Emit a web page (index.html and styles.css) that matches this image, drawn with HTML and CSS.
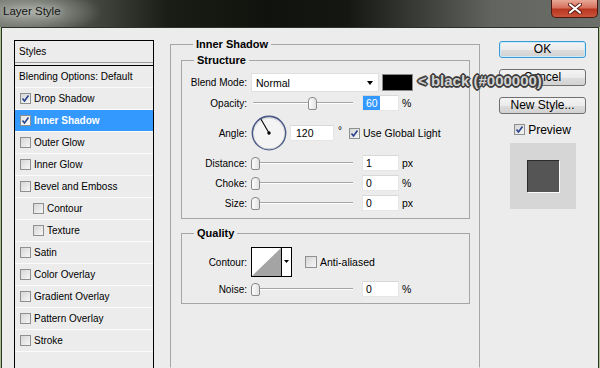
FILE: index.html
```html
<!DOCTYPE html>
<html lang="en">
<head>
  <meta charset="UTF-8">
  <title>Layer Style</title>
  <link rel="stylesheet" href="styles.css">
</head>
<body>
  <div class="titlebar">
    <span class="title">Layer Style</span>
    <div class="close">
      <svg width="14" height="11" viewBox="0 0 14 11">
        <path d="M2 1.5 L12 9.5 M12 1.5 L2 9.5" stroke="#5a1b10" stroke-width="4" stroke-linecap="round"/>
        <path d="M2 1.5 L12 9.5 M12 1.5 L2 9.5" stroke="#fff" stroke-width="2.2" stroke-linecap="round"/>
      </svg>
    </div>
  </div>

  <div class="window">
    <ul class="styles-list">
      <li class="head">Styles</li>
      <li class="blend">Blending Options: Default</li>
      <li><span class="cb"><svg width="9" height="9" viewBox="0 0 9 9"><path d="M1.5 4.5 L3.5 7 L7.5 1.5" stroke="#27418c" stroke-width="1.6" fill="none"/></svg></span>Drop Shadow</li>
      <li class="selected"><span class="cb"><svg width="9" height="9" viewBox="0 0 9 9"><path d="M1.5 4.5 L3.5 7 L7.5 1.5" stroke="#27418c" stroke-width="1.6" fill="none"/></svg></span>Inner Shadow</li>
      <li><span class="cb"></span>Outer Glow</li>
      <li><span class="cb"></span>Inner Glow</li>
      <li><span class="cb"></span>Bevel and Emboss</li>
      <li class="sub"><span class="cb"></span>Contour</li>
      <li class="sub"><span class="cb"></span>Texture</li>
      <li><span class="cb"></span>Satin</li>
      <li><span class="cb"></span>Color Overlay</li>
      <li><span class="cb"></span>Gradient Overlay</li>
      <li><span class="cb"></span>Pattern Overlay</li>
      <li><span class="cb"></span>Stroke</li>
    </ul>

    <div class="settings">
      <fieldset class="group outer">
        <legend>Inner Shadow</legend>

        <fieldset class="group structure">
          <legend>Structure</legend>
          <div class="row blend-row">
            <span class="lbl">Blend Mode:</span>
            <div class="select">Normal<span class="arrow"></span></div>
            <span class="swatch"></span>
            <span class="note">&lt; black (#000000)</span>
          </div>
          <div class="row opacity-row">
            <span class="lbl">Opacity:</span>
            <div class="slider"><span class="thumb" style="margin-left:57px"></span></div>
            <div class="num"><span class="hl">60</span></div>
            <span class="unit">%</span>
          </div>
          <div class="row angle-row">
            <span class="lbl">Angle:</span>
            <svg class="dial" width="36" height="36" viewBox="0 0 36 36">
              <circle cx="18" cy="18" r="16.6" fill="#f4f4f4" stroke="#4a5a86" stroke-width="1.6"/>
              <circle cx="18" cy="18.6" r="15.5" fill="none" stroke="#d8d8d8" stroke-width="0.8"/>
              <line x1="18" y1="18" x2="10" y2="4.3" stroke="#000" stroke-width="1.1"/>
              <circle cx="18" cy="18" r="1.7" fill="#000"/>
            </svg>
            <div class="num wide">120</div>
            <span class="deg">°</span>
            <span class="cb"><svg width="9" height="9" viewBox="0 0 9 9"><path d="M1.5 4.5 L3.5 7 L7.5 1.5" stroke="#27418c" stroke-width="1.6" fill="none"/></svg></span>
            <span class="cb-label">Use Global Light</span>
          </div>
          <div class="row">
            <span class="lbl">Distance:</span>
            <div class="slider"><span class="thumb"></span></div>
            <div class="num">1</div>
            <span class="unit">px</span>
          </div>
          <div class="row">
            <span class="lbl">Choke:</span>
            <div class="slider"><span class="thumb"></span></div>
            <div class="num">0</div>
            <span class="unit">%</span>
          </div>
          <div class="row">
            <span class="lbl">Size:</span>
            <div class="slider"><span class="thumb"></span></div>
            <div class="num">0</div>
            <span class="unit">px</span>
          </div>
        </fieldset>

        <fieldset class="group quality">
          <legend>Quality</legend>
          <div class="row contour-row">
            <span class="lbl">Contour:</span>
            <svg class="contour" width="41" height="30" viewBox="0 0 41 30">
              <rect x="0.5" y="0.5" width="40" height="29" fill="#fff" stroke="#000"/>
              <polygon points="1,29 30,1 30,29" fill="#a4a4a4"/>
              <line x1="30.5" y1="0" x2="30.5" y2="30" stroke="#000"/>
              <polygon points="33,13 38,13 35.5,16" fill="#000"/>
            </svg>
            <span class="cb anti"></span>
            <span class="cb-label">Anti-aliased</span>
          </div>
          <div class="row">
            <span class="lbl">Noise:</span>
            <div class="slider"><span class="thumb"></span></div>
            <div class="num">0</div>
            <span class="unit">%</span>
          </div>
        </fieldset>
      </fieldset>
    </div>

    <div class="actions">
      <button class="btn default">OK</button>
      <button class="btn">Cancel</button>
      <button class="btn">New Style...</button>
      <label class="preview-check">
        <span class="cb"><svg width="9" height="9" viewBox="0 0 9 9"><path d="M1.5 4.5 L3.5 7 L7.5 1.5" stroke="#27418c" stroke-width="1.6" fill="none"/></svg></span>
        Preview
      </label>
      <div class="preview"><div class="preview-square"></div></div>
    </div>
  </div>
</body>
</html>
```

FILE: styles.css
```css
* {
  box-sizing: border-box;
}

body {
  margin: 0;
  width: 600px;
  height: 368px;
  overflow: hidden;
  display: flex;
  flex-direction: column;
  font-family: 'Liberation Sans', Arial, sans-serif;
  font-size: 10px;
  color: #000;
  background: #a9c28f;
}

/* title bar */

.titlebar {
  height: 27px;
  flex: none;
  display: flex;
  justify-content: space-between;
  align-items: flex-start;
  background:
    radial-gradient(ellipse 70px 22px at 32px 12px, rgba(190, 194, 186, 0.75), rgba(190, 194, 186, 0) 100%),
    linear-gradient(90deg, #6a6d66 0, #4a4d46 14%, #1a1d16 28%, #10130d 45%, #141712 58%, #3b3d38 70%, #62645f 82%, #6c6e69 100%);
}

.title {
  padding: 5px 0 0 3px;
  font-size: 11.5px;
  color: #141414;
  text-shadow: 0 0 6px #d4d6d2;
}

.close {
  width: 47px;
  height: 18px;
  margin-right: 2px;
  display: flex;
  align-items: center;
  justify-content: center;
  border: 1px solid #4a1a12;
  border-top: none;
  border-radius: 0 0 5px 5px;
  background: linear-gradient(#e8a996, #d5715c 45%, #b9361f 55%, #c9553b);
}

/* dialog body */

.window {
  flex: 1;
  display: flex;
  margin: 0 1px;
  padding: 12px 12px 0 12px;
  border: 1px solid #2d3229;
  border-bottom: none;
  background: #ececec;
  min-height: 0;
  overflow: hidden;
}

.styles-list {
  list-style: none;
  margin: 0;
  padding: 0;
  width: 140px;
  flex: none;
  border: 1px solid #000;
  border-bottom: none;
}

.styles-list li {
  height: 22px;
  display: flex;
  align-items: center;
  padding-left: 5px;
  border-bottom: 1px solid #fbfbfb;
}

.styles-list .head {
  height: 22px;
  padding-left: 4px;
  border-bottom: 1px solid #9c9c9c;
  margin-bottom: 2px;
}

.styles-list .blend {
  padding-left: 4px;
  border-top: 1px solid #000;
  height: 23px;
}

.styles-list .sub {
  padding-left: 18px;
}

.styles-list .selected {
  background: #3399ff;
  color: #fff;
  font-weight: bold;
}

.cb {
  width: 11px;
  height: 11px;
  flex: none;
  display: inline-flex;
  align-items: center;
  justify-content: center;
  border: 1px solid #8e8f8f;
  background: linear-gradient(135deg, #d6d6d6, #f6f6f6);
  margin-right: 3px;
}

.styles-list .selected .cb {
  background: linear-gradient(135deg, #e4e4e4, #fdfdfd);
}

/* settings groups */

.settings {
  width: 310px;
  flex: none;
  margin-left: 16px;
  margin-top: -2px;
  display: flex;
  flex-direction: column;
}

.group {
  margin: 0;
  min-width: 0;
  border: 1px solid #a6a6a6;
}

.group legend {
  font-weight: bold;
  font-size: 11px;
  line-height: 13px;
  padding: 0 3px;
  margin-left: 12px;
}

.outer {
  flex: 1;
  padding: 0 9px 0 10px;
  border-bottom-color: transparent;
}

.structure {
  margin-top: 3px;
  padding: 6px 0 6px 0;
}

.quality {
  margin-top: 8px;
  padding: 7px 0 5px 0;
}

.row {
  display: flex;
  align-items: center;
  height: 18px;
  position: relative;
  white-space: nowrap;
}

.lbl {
  width: 65px;
  text-align: right;
  margin-right: 4px;
  flex: none;
}

.blend-row {
  height: 19px;
  margin-bottom: 2px;
}

.opacity-row {
  margin-bottom: 3px;
}

.angle-row {
  height: 36px;
  margin-bottom: 3px;
}

.structure .row + .row + .row + .row + .row {
  margin-top: 2px;
}

.select {
  width: 128px;
  height: 19px;
  display: flex;
  align-items: center;
  justify-content: space-between;
  padding: 0 5px 0 4px;
  background: #fff;
  border: 1px solid #e0e0e0;
  font-size: 10.5px;
}

.arrow {
  border-left: 3.5px solid transparent;
  border-right: 3.5px solid transparent;
  border-top: 4px solid #000;
}

.swatch {
  width: 31px;
  height: 17px;
  margin-left: 3px;
  background: #000;
  border: 1px solid #8a8a8a;
}

.note {
  position: absolute;
  left: 236px;
  top: -1px;
  z-index: 2;
  font-size: 15px;
  font-weight: bold;
  color: #d2d2d2;
  text-shadow:
    1px 0 0 #3c3c3c, -1px 0 0 #3c3c3c, 0 1px 0 #3c3c3c, 0 -1px 0 #3c3c3c,
    1px 1px 0 #3c3c3c, -1px -1px 0 #3c3c3c, 1px -1px 0 #3c3c3c, -1px 1px 0 #3c3c3c,
    2px 0 0 #555, -2px 0 0 #555, 0 2px 0 #555, 0 -2px 0 #555;
}

.slider {
  width: 102px;
  height: 18px;
  margin-right: 9px;
  display: flex;
  align-items: center;
  background:
    linear-gradient(#a4a4a4, #a4a4a4) no-repeat 2px 8px / 100px 1px,
    linear-gradient(#ffffff, #ffffff) no-repeat 2px 9px / 100px 1px;
}

.thumb {
  width: 9px;
  height: 13px;
  border: 1px solid #8a8a8a;
  border-radius: 4px 4px 2px 2px;
  background: linear-gradient(90deg, #fdfdfd, #e2e2e2);
}

.num {
  width: 37px;
  height: 16px;
  padding-left: 3px;
  line-height: 14px;
  background: #fff;
  border: 1px solid #e6e6e6;
  border-top-color: #d8d8d8;
  font-size: 10.5px;
}

.num.wide {
  width: 44px;
  margin-left: 3px;
  padding-left: 5px;
}

.opacity-row .num {
  padding-left: 0;
}

.hl {
  display: inline-block;
  background: #3399ff;
  color: #fff;
  padding: 0 2px 0 3px;
}

.unit {
  margin-left: 3px;
  font-size: 10.5px;
}

.deg {
  margin: -6px 0 0 4px;
  width: 8px;
}

.angle-row .cb {
  margin-left: 3px;
}

.cb-label {
  font-size: 10.5px;
}

.dial {
  flex: none;
}

.contour-row {
  height: 30px;
  margin-bottom: 3px;
}

.contour {
  flex: none;
}

.cb.anti {
  margin-left: 13px;
  width: 12px;
  height: 12px;
}

/* right column */

.actions {
  width: 87px;
  flex: none;
  margin-left: 19px;
  padding-top: 1px;
  display: flex;
  flex-direction: column;
  align-items: center;
}

.btn {
  width: 87px;
  height: 17px;
  margin: 0 0 11px;
  padding: 0;
  font-family: 'Liberation Sans', Arial, sans-serif;
  font-size: 12px;
  line-height: 15px;
  color: #000;
  border: 1px solid #707070;
  border-radius: 3px;
  background: linear-gradient(#f4f4f4, #ebebeb 50%, #dddddd 50%, #d2d2d2);
}

.btn.default {
  border-color: #3c9ad6;
  box-shadow: inset 0 0 0 1px #c8ecfb;
}

.preview-check {
  display: flex;
  align-items: center;
  height: 13px;
  margin-top: -2px;
  font-size: 12px;
}

.preview {
  width: 66px;
  height: 66px;
  margin-top: 7px;
  background: #d6d6d6;
  display: flex;
  align-items: center;
  justify-content: center;
}

.preview-square {
  width: 32px;
  height: 32px;
  background: #555555;
  border-top: 1px solid #2a2a2a;
  border-left: 1px solid #2a2a2a;
  box-shadow: 1px 1px 0 #fafafa;
}
```
